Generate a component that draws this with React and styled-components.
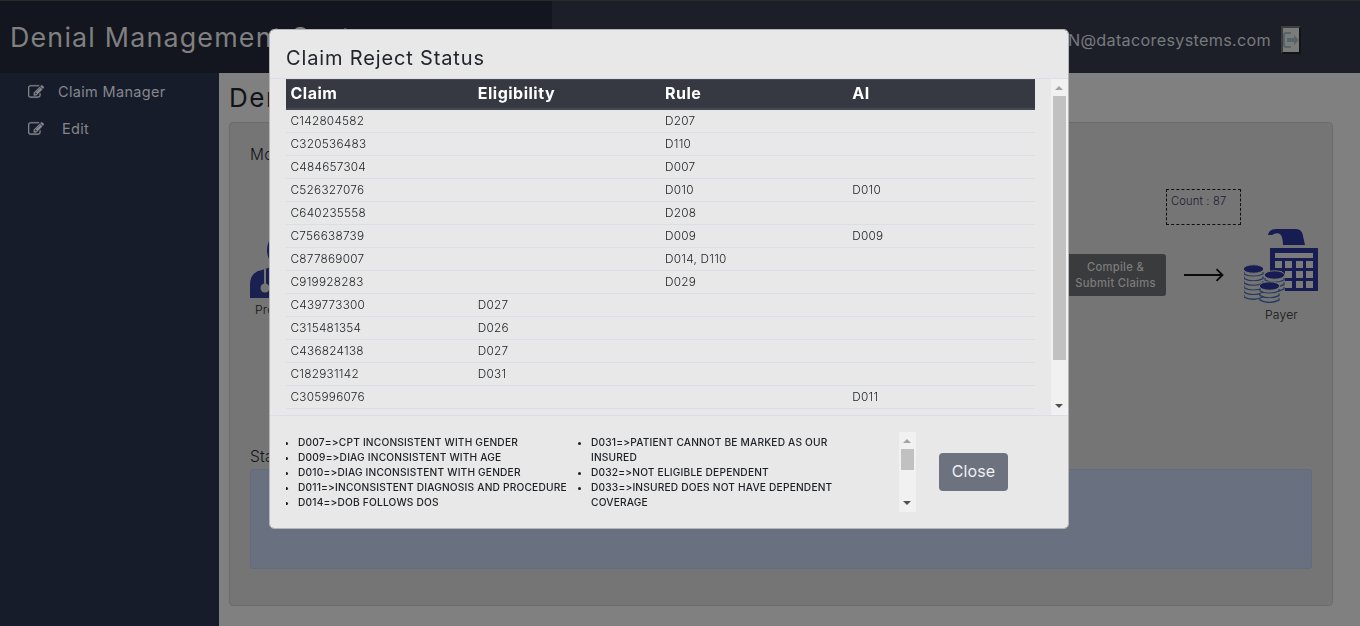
import React from "react";
import styled, { createGlobalStyle } from "styled-components";

const Global = createGlobalStyle`
  *, *::before, *::after { box-sizing: border-box; }
  body {
    margin: 0;
    background: #808080;
    font-family: Inter, "Liberation Sans", sans-serif;
    font-feature-settings: "calt" 0;
    color: #111316;
    overflow: hidden;
  }
`;

const Page = styled.div`
  height: 626px;
  display: flex;
  flex-direction: column;
  overflow: hidden;
`;

const TopBar = styled.header`
  display: flex;
  height: 73px;
  flex: none;
  border-top: 1px solid #2b2b2b;
  background: #1d1f28;
`;

const Brand = styled.div`
  width: 552px;
  padding: 17px 0 0 10px;
  background: #13161e;
  color: #808080;
  font-size: 26.8px;
  line-height: 38px;
  letter-spacing: 1.2px;
  white-space: nowrap;
`;

const Account = styled.div`
  flex: 1;
  display: flex;
  align-items: center;
  justify-content: flex-end;
  gap: 10px;
  padding: 6px 59px 0 0;
  color: #777a7e;
  font-size: 16.2px;
  letter-spacing: 0.3px;
`;

const LogoutButton = styled.button`
  width: 20px;
  height: 28px;
  padding: 0;
  display: flex;
  align-items: center;
  justify-content: center;
  background: #7b7b7b;
  border: 2px solid;
  border-color: #3d3d3f #141414 #141414 #3d3d3f;
  color: #56646c;
`;

const Main = styled.div`
  flex: 1;
  display: flex;
  min-height: 0;
`;

const Sidebar = styled.nav`
  width: 219px;
  flex: none;
  background: #171c2b;
  color: #85878c;
`;

const NavItem = styled.a`
  display: flex;
  align-items: center;
  height: 37px;
  padding-left: 28px;
  gap: ${(p) => p.$gap}px;
  font-size: 14.5px;
  letter-spacing: 0.33px;
`;

const Content = styled.main`
  flex: 1;
  padding: 8px 27px 0 10px;
`;

const PageTitle = styled.h1`
  margin: 0 0 7px;
  font-size: 26px;
  line-height: 34px;
  font-weight: 400;
  letter-spacing: 1.5px;
`;

const Panel = styled.section`
  height: 484px;
  padding: 21px 14px 0 20px;
  background: #757575;
  border: 1px solid #6b6b6b;
  border-radius: 4px;
`;

const PanelLabel = styled.div`
  height: ${(p) => p.$height}px;
  font-size: 15.5px;
  line-height: 22px;
  font-weight: 300;
  letter-spacing: 0.3px;
`;

const CountRow = styled.div`
  display: flex;
  justify-content: flex-end;
  padding-right: 77px;
  height: 40px;
`;

const CountBox = styled.div`
  width: 75px;
  height: 36px;
  padding: 3px 4px;
  border: 1px dashed #111;
  color: #221b33;
  font-size: 11.2px;
  line-height: 16px;
  font-weight: 300;
  letter-spacing: 0.15px;
`;

const FlowRow = styled.div`
  display: flex;
  height: 217px;
  margin-right: -1px;
`;

const Stage = styled.div`
  width: ${(p) => p.$width}px;
  padding-top: ${(p) => p.$top}px;
  font-size: 12.2px;
  line-height: 16px;
  font-weight: 300;
  letter-spacing: 0.15px;

  svg { display: block; }
`;

const StageName = styled.div`
  padding: 4px 0 0 ${(p) => p.$indent}px;
`;

const CompileButton = styled.button`
  width: 101px;
  height: 42px;
  margin: 25px 18px 0 auto;
  padding: 0;
  border: 0;
  border-radius: 3px;
  background: #3a3b3d;
  color: #7c7c7c;
  font: 500 11.2px/16px Inter, "Liberation Sans", sans-serif;
  letter-spacing: 0.3px;
`;

const ArrowSlot = styled.div`
  width: 40px;
  margin: 39px 20px 0 0;

  svg { display: block; }
`;

const StatusBox = styled.div`
  height: 100px;
  margin-right: 6px;
  background: #69707f;
  border: 1px solid #626b80;
  border-radius: 3px;
`;

const Dialog = styled.div`
  position: fixed;
  left: 269px;
  top: 29px;
  width: 800px;
  height: 500px;
  display: flex;
  flex-direction: column;
  background: #e8e8e8;
  background-clip: padding-box;
  border: 1px solid #b5b5b7;
  border-radius: 5px;
  overflow: hidden;
  color: #212529;
`;

const DialogHeader = styled.div`
  height: 49px;
  flex: none;
  padding: 13px 16px 0;
  border-bottom: 1px solid #dcdde6;
  font-size: 20px;
  line-height: 30px;
  letter-spacing: 0.85px;
`;

const DialogBody = styled.div`
  height: 336px;
  flex: none;
  display: flex;
  justify-content: space-between;
  padding-left: 16px;
  overflow: hidden;
`;

const Table = styled.div`
  width: 749px;
`;

const HeadRow = styled.div`
  display: grid;
  grid-template-columns: repeat(4, 1fr);
  height: 31px;
  background: #363942;
  border-top: 1px solid #454953;
  border-bottom: 2px solid #454953;
  color: #fff;
  font-size: 16px;
  font-weight: 700;
  line-height: 27px;
  letter-spacing: 0.5px;
`;

const Row = styled.div`
  display: grid;
  grid-template-columns: repeat(4, 1fr);
  height: 23px;
  border-bottom: 1px solid #dcdde6;
  font-size: 11.8px;
  font-weight: 300;
  line-height: 22px;
  letter-spacing: 0.25px;
`;

const Cell = styled.div`
  padding-left: 4.5px;
  white-space: nowrap;
`;

const ScrollTrack = styled.div`
  width: 17px;
  height: ${(p) => p.$height}px;
  flex: none;
  display: flex;
  flex-direction: column;
  align-items: center;
  background: #f1f1f1;
`;

const ScrollArrow = styled.div`
  height: 17px;
  display: flex;
  align-items: center;
  padding: 0 1px ${(p) => (p.$down ? 2 : 0)}px 0;
  margin-top: ${(p) => (p.$down ? "auto" : "0")};

  &::before {
    content: "";
    border: 4px solid transparent;
    border-top: ${(p) => (p.$down ? "4px solid #505050" : "0")};
    border-bottom: ${(p) => (p.$down ? "0" : "4px solid #a3a3a3")};
  }
`;

const ScrollThumb = styled.div`
  width: 13px;
  height: ${(p) => p.$height}px;
  background: #c1c1c1;
`;

const DialogFooter = styled.div`
  flex: 1;
  display: flex;
  align-items: flex-start;
  padding: 16px 0 0 16px;
  border-top: 1px solid #dcdde6;
`;

const CodeScroller = styled.div`
  width: 630px;
  height: 80px;
  display: flex;
  overflow: hidden;
`;

const CodeList = styled.ul`
  width: ${(p) => p.$width}px;
  margin: 3px 0 0;
  padding: 0 0 0 12px;
  font-size: 10.2px;
  line-height: 15px;
  font-weight: 500;
  letter-spacing: 0.18px;
  white-space: nowrap;
`;

const CodeItem = styled.li`
  color: #1c1f24;
`;

const CloseButton = styled.button`
  width: 69px;
  height: 38px;
  margin: 21px 0 0 23px;
  padding: 0 0 2px;
  border: 0;
  border-radius: 4px;
  background: #6c727e;
  color: #f0f0f0;
  font: 400 16px/24px Inter, "Liberation Sans", sans-serif;
  letter-spacing: 0.1px;
`;

const EditIcon = () => (
  <svg width="16" height="16" viewBox="0 0 1792 1792" fill="currentColor" stroke="currentColor" strokeWidth="30">
    <path d="M888 1184l116-116-152-152-116 116v56h96v96h56zm440-720q-16-16-33 1l-350 350q-17 17-1 33t33-1l350-350q17-17 1-33zm80 594v190q0 119-84.500 203.500t-203.500 84.500h-832q-119 0-203.500-84.500t-84.500-203.500v-832q0-119 84.500-203.500t203.500-84.500h832q63 0 117 25 15 7 18 23 3 17-9 29l-49 49q-14 14-32 8-23-6-45-6h-832q-66 0-113 47t-47 113v832q0 66 47 113t113 47h832q66 0 113-47t47-113v-126q0-13 9-22l64-64q15-15 35-7t20 29zm-96-738l288 288-672 672h-288v-288zm444 132l-92 92-288-288 92-92q28-28 68-28t68 28l152 152q28 28 28 68t-28 68z" />
  </svg>
);

const LogoutIcon = () => (
  <svg width="16" height="18" viewBox="0 0 16 18" fill="none">
    <path d="M8 2H3Q1 2 1 4v10q0 2 2 2h5" stroke="currentColor" strokeWidth="2" />
    <path d="M4 7h7V4l5 5-5 5v-3H4z" fill="currentColor" />
  </svg>
);

const ArrowIcon = () => (
  <svg width="40" height="14" viewBox="0 0 40 14" fill="none" stroke="#0a0a0a" strokeWidth="1.8">
    <path d="M0 7H38M32.500 1.200L38.500 7L32.500 12.800" />
  </svg>
);

const DoctorIcon = () => (
  <svg width="76" height="66" viewBox="0 0 76 66">
    <circle cx="38" cy="18" r="21" fill="#1a2050" />
    <path d="M0 66V53Q0 40 12 38L27 33H49L64 38Q76 40 76 53V66Z" fill="#1a2050" />
    <path d="M15 37V53" stroke="#757575" strokeWidth="2" />
    <circle cx="15" cy="56" r="4.500" fill="#757575" />
  </svg>
);

const Coins = ({ x, y, rows }) => (
  <g>
    {Array.from({ length: rows }, (_, i) => (
      <path
        key={i}
        d={`M${x - 9.5} ${y + 3 + i * 4.6}v2q9.500 4.500 19 0v-2`}
        fill="#757575"
        stroke="#26395f"
        strokeWidth="1.300"
      />
    ))}
    <ellipse cx={x} cy={y} rx="10.200" ry="4.200" fill="#171c52" stroke="#757575" />
  </g>
);

const PayerIcon = () => (
  <svg width="75" height="74" viewBox="0 0 75 74">
    <path d="M24 6Q25 0 32 0H52Q58 0 59 7L61 16H39Q39 8 36 5Q32 3 28 6Z" fill="#171c52" />
    <path d="M26 19H74V62H26Z" fill="#171c52" />
    <path d="M31 24H69V29H31Z" fill="#7a7a7a" />
    {[32, 42, 52].map((y) =>
      [31, 41, 52, 62].map((x) => (
        <rect key={`${x}-${y}`} x={x} y={y} width="7" height="7" fill="#7a7a7a" />
      ))
    )}
    <path d="M20 46Q31 38 41 46V64H20Z" fill="#757575" />
    <Coins x={9.5} y={40} rows={6} />
    <Coins x={30.5} y={46} rows={3} />
    <Coins x={25.5} y={57} rows={3} />
  </svg>
);

const claims = [
  ["C142804582", "", "D207", ""],
  ["C320536483", "", "D110", ""],
  ["C484657304", "", "D007", ""],
  ["C526327076", "", "D010", "D010"],
  ["C640235558", "", "D208", ""],
  ["C756638739", "", "D009", "D009"],
  ["C877869007", "", "D014, D110", ""],
  ["C919928283", "", "D029", ""],
  ["C439773300", "D027", "", ""],
  ["C315481354", "D026", "", ""],
  ["C436824138", "D027", "", ""],
  ["C182931142", "D031", "", ""],
  ["C305996076", "", "", "D011"],
];

const Scrollbar = ({ height, thumb }) => (
  <ScrollTrack $height={height}>
    <ScrollArrow />
    <ScrollThumb $height={thumb} />
    <ScrollArrow $down />
  </ScrollTrack>
);

export default function App() {
  return (
    <>
      <Global />
      <Page>
        <TopBar>
          <Brand>Denial Management System</Brand>
          <Account>
            <span>ADMIN@datacoresystems.com</span>
            <LogoutButton aria-label="Log out"><LogoutIcon /></LogoutButton>
          </Account>
        </TopBar>
        <Main>
          <Sidebar>
            <NavItem $gap={14}><EditIcon />Claim Manager</NavItem>
            <NavItem $gap={18}><EditIcon />Edit</NavItem>
          </Sidebar>
          <Content>
            <PageTitle>Denial Management</PageTitle>
            <Panel>
              <PanelLabel $height={45}>Model</PanelLabel>
              <CountRow><CountBox>Count : 87</CountBox></CountRow>
              <FlowRow>
                <Stage $width={76} $top={3}>
                  <DoctorIcon />
                  <StageName $indent={5}>Provider</StageName>
                </Stage>
                <CompileButton>Compile &amp;<br />Submit Claims</CompileButton>
                <ArrowSlot><ArrowIcon /></ArrowSlot>
                <Stage $width={75} $top={0}>
                  <PayerIcon />
                  <StageName $indent={21}>Payer</StageName>
                </Stage>
              </FlowRow>
              <PanelLabel $height={23}>Status</PanelLabel>
              <StatusBox />
            </Panel>
          </Content>
        </Main>
      </Page>
      <Dialog role="dialog">
        <DialogHeader>Claim Reject Status</DialogHeader>
        <DialogBody>
          <Table>
            <HeadRow>
              {["Claim", "Eligibility", "Rule", "AI"].map((h) => <Cell key={h}>{h}</Cell>)}
            </HeadRow>
            {claims.map((row) => (
              <Row key={row[0]}>
                {row.map((value, i) => <Cell key={i}>{value}</Cell>)}
              </Row>
            ))}
          </Table>
          <Scrollbar height={336} thumb={264} />
        </DialogBody>
        <DialogFooter>
          <CodeScroller>
            <CodeList $width={293}>
              <CodeItem>D007=&gt;CPT INCONSISTENT WITH GENDER</CodeItem>
              <CodeItem>D009=&gt;DIAG INCONSISTENT WITH AGE</CodeItem>
              <CodeItem>D010=&gt;DIAG INCONSISTENT WITH GENDER</CodeItem>
              <CodeItem>D011=&gt;INCONSISTENT DIAGNOSIS AND PROCEDURE</CodeItem>
              <CodeItem>D014=&gt;DOB FOLLOWS DOS</CodeItem>
            </CodeList>
            <CodeList $width={320}>
              <CodeItem>D031=&gt;PATIENT CANNOT BE MARKED AS OUR<br />INSURED</CodeItem>
              <CodeItem>D032=&gt;NOT ELIGIBLE DEPENDENT</CodeItem>
              <CodeItem>D033=&gt;INSURED DOES NOT HAVE DEPENDENT<br />COVERAGE</CodeItem>
            </CodeList>
            <Scrollbar height={80} thumb={21} />
          </CodeScroller>
          <CloseButton>Close</CloseButton>
        </DialogFooter>
      </Dialog>
    </>
  );
}
